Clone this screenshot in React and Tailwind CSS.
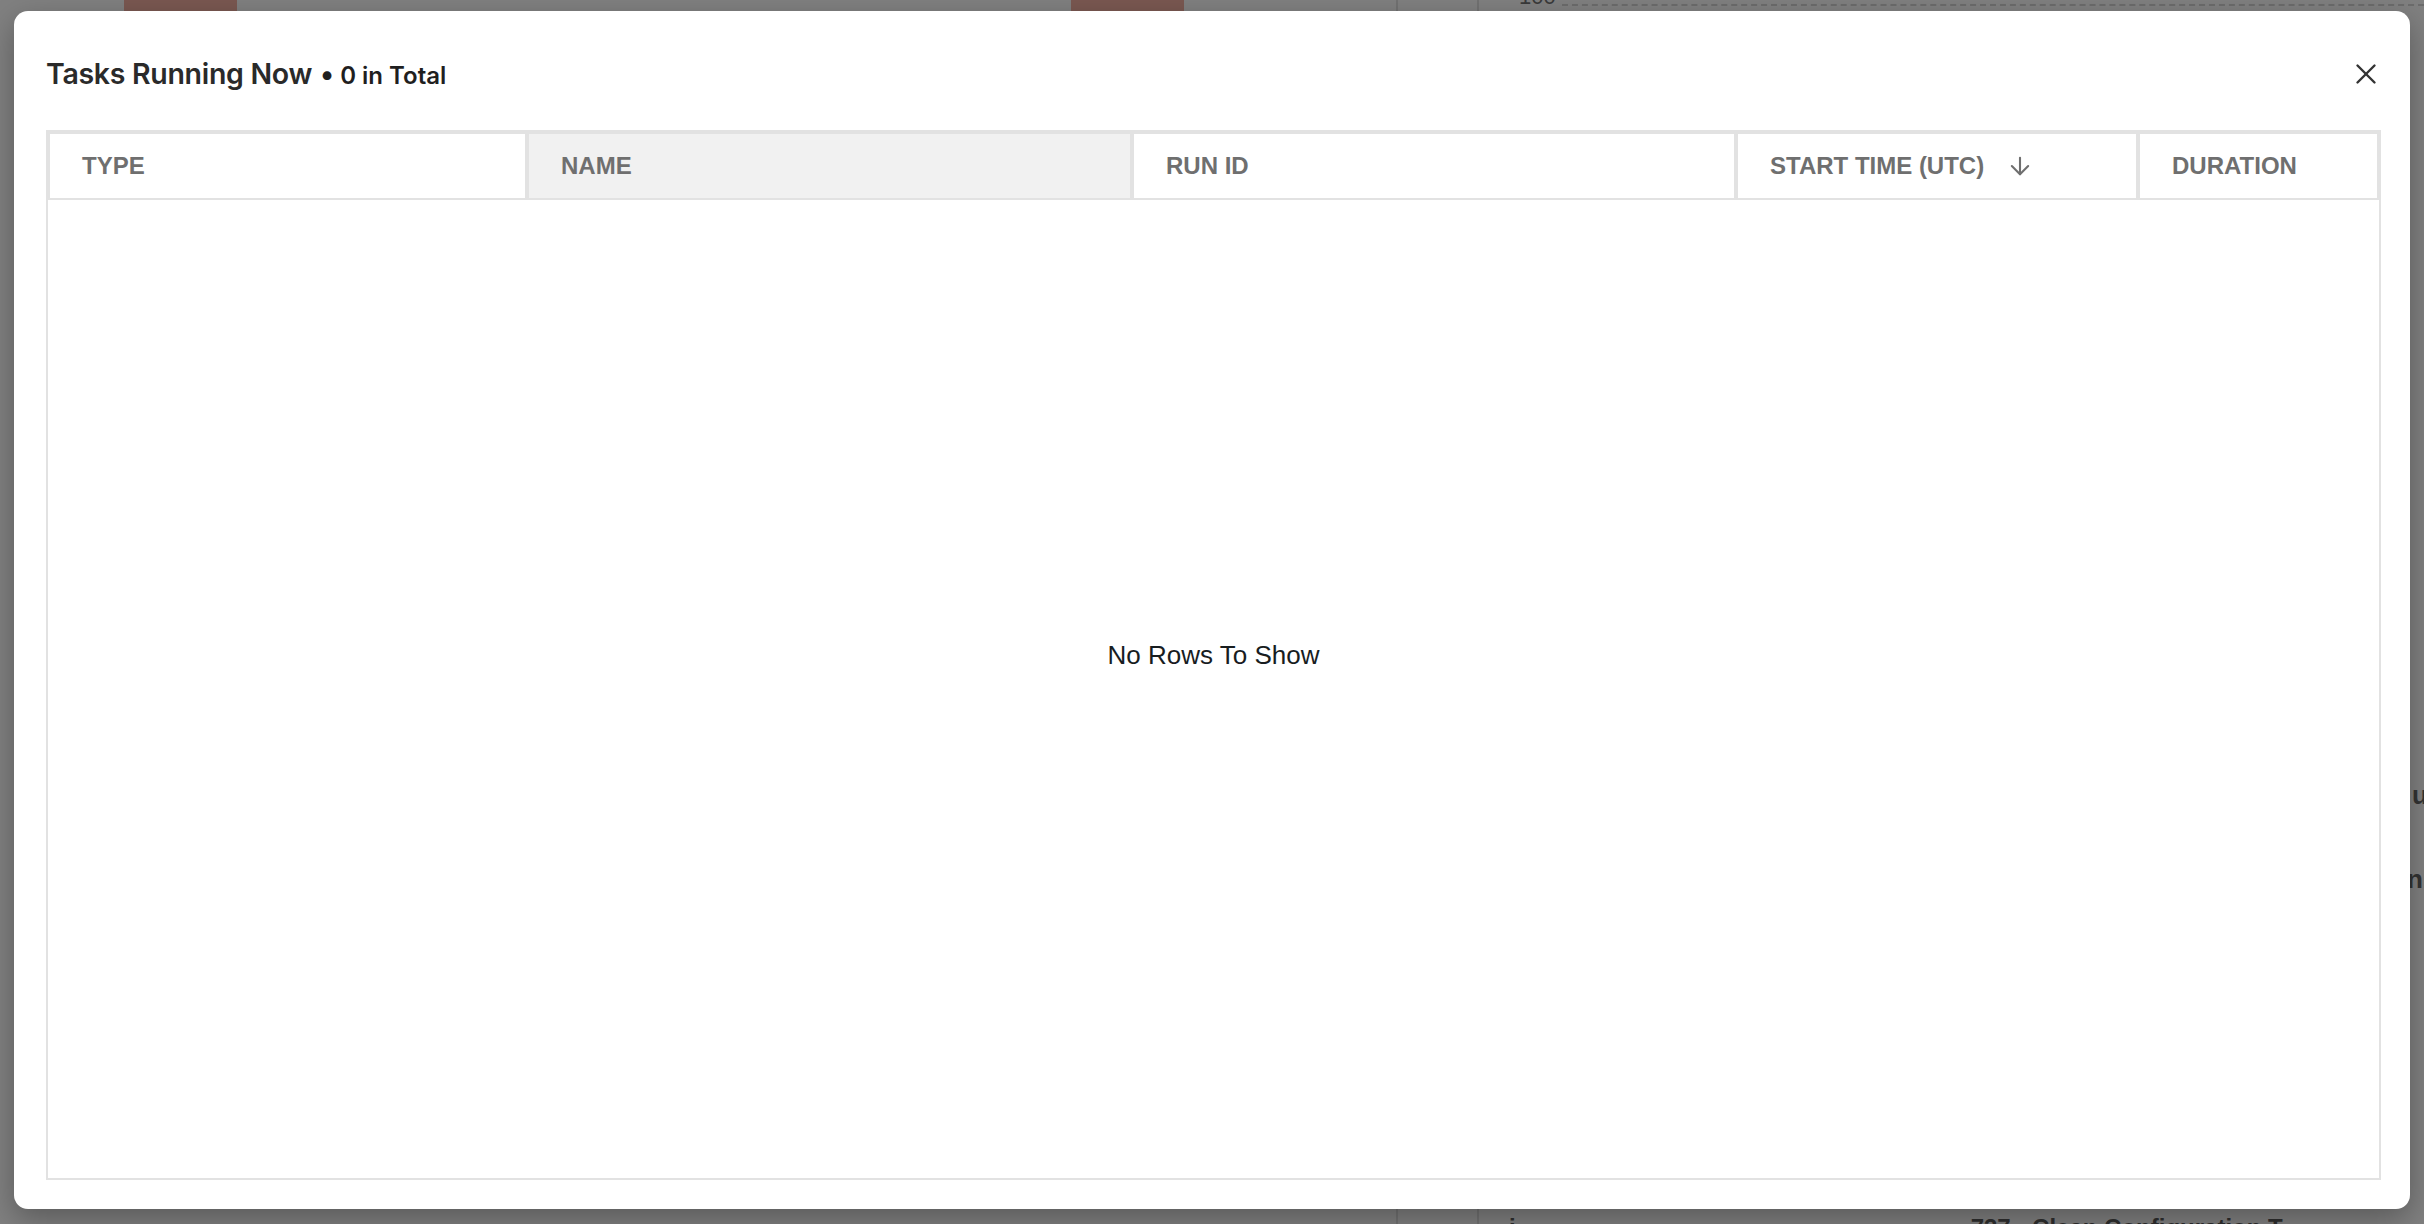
import { ArrowDown, X } from "lucide-react";

const columns = [
  { key: "type", label: "TYPE", width: "w-[479px]" },
  { key: "name", label: "NAME", width: "w-[605px]", active: true },
  { key: "runId", label: "RUN ID", width: "w-[604px]" },
  { key: "startTime", label: "START TIME (UTC)", width: "w-[402px]", sorted: true },
  { key: "duration", label: "DURATION", width: "flex-1" },
];

const rows = [];

// Dimmed dashboard sitting behind the dialog
function Backdrop() {
  return (
    <div className="absolute inset-0 flex overflow-hidden">
      <div className="flex h-[12px] w-[1396px] items-start">
        <div className="ml-[124px] h-full w-[113px] bg-[#7a5851]" />
        <div className="ml-[834px] h-full w-[113px] bg-[#7a5851]" />
      </div>
      <div className="h-full w-[83px] border-x-2 border-[#727272]" />
      <div className="flex flex-1 flex-col">
        <div className="flex items-start gap-[6px] pl-[40px]">
          <span className="-mt-[14px] text-[22px] leading-none text-[#3a3a3a]">100</span>
          <div className="mt-[4px] flex-1 border-t-2 border-dashed border-[#6c6c6c]" />
        </div>
        <div className="mt-[774px] flex flex-col items-end gap-[58px] text-[26px] font-semibold leading-none text-[#333]">
          <span className="-mr-[4px]">u</span>
          <span className="-mr-[6px]">ni</span>
        </div>
        <div className="mt-auto flex h-[12px] items-start gap-[455px] pl-[30px] text-[24px] font-semibold leading-none text-[#2e2e2e]">
          <span className="mt-[4px]">i</span>
          <span className="mt-[4px] whitespace-nowrap">737 · Clean Configuration T</span>
        </div>
      </div>
    </div>
  );
}

function HeaderCell({ col }) {
  return (
    <div
      className={`${col.width} h-[68px] flex items-center border-2 border-[#e2e2e2] px-[32px] ${
        col.active ? "bg-[#f1f1f1]" : "bg-white"
      }`}
    >
      <span className="text-[24px] font-bold text-[#6f6f6f]">{col.label}</span>
      {col.sorted && (
        <ArrowDown size={28} strokeWidth={1.8} className="ml-[22px] text-[#6f6f6f]" />
      )}
    </div>
  );
}

export default function App() {
  return (
    <div
      className="relative h-[1224px] w-[2424px] overflow-hidden bg-[#808080] pl-[14px] pr-[14px] pt-[11px] pb-[15px]"
      style={{ fontFamily: "'Liberation Sans', Arial, sans-serif" }}
    >
      <Backdrop />

      <div className="relative flex h-full flex-col rounded-[14px] bg-white pl-[32px] pr-[29px] pt-[43px] pb-[29px] shadow-[0_10px_30px_rgba(0,0,0,0.3)]">
        {/* Title bar */}
        <div className="flex h-[40px] items-center justify-between">
          <h2
            className="flex items-baseline text-[#2a2a2a]"
            style={{ fontFamily: "Inter, 'Noto Sans', sans-serif" }}
          >
            <span className="text-[28.5px] font-semibold tracking-[-0.3px]">Tasks Running Now</span>
            <span className="ml-[8px] text-[24px] font-semibold text-[#1f1f1f]">
              <span className="text-[28px]">•</span> 0 in Total
            </span>
          </h2>
          <button className="-mr-[2px] text-[#333]">
            <X size={34} strokeWidth={1.7} />
          </button>
        </div>

        {/* Grid */}
        <div className="relative mt-[36px] flex flex-1 flex-col border-2 border-[#e2e2e2]">
          <div className="flex">
            {columns.map((col) => (
              <HeaderCell key={col.key} col={col} />
            ))}
          </div>
          <div className="flex-1">
            {rows.map((row) => (
              <div key={row.id} />
            ))}
          </div>

          {rows.length === 0 && (
            <div className="pointer-events-none absolute inset-0 flex items-center justify-center">
              <span className="text-[26px] text-[#181d1f]">No Rows To Show</span>
            </div>
          )}
        </div>
      </div>
    </div>
  );
}
